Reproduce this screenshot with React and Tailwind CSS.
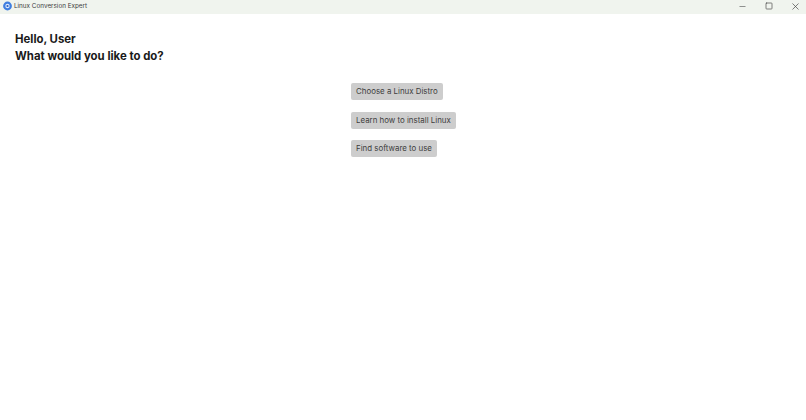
import { Minus, Square, X } from 'lucide-react'

const CHOICES = ['Choose a Linux Distro', 'Learn how to install Linux', 'Find software to use']

function TitleBar() {
  return (
    <div className="flex items-start justify-between h-[14px] bg-[#f0f4ee]">
      <div className="flex items-center gap-[2px] pl-[3px] pt-[1px]">
        <svg width="9" height="10" viewBox="0 0 9 10">
          <circle cx="4.5" cy="5" r="4.4" fill="#3f7fe0" />
          <circle cx="4.5" cy="5" r="2.2" fill="#dbe8fb" />
          <circle cx="4.5" cy="5" r="1.1" fill="#2a5fc0" />
        </svg>
        <span className="text-[6.35px] leading-[10px] text-[#3d3d3d]">Linux Conversion Expert</span>
      </div>
      <div className="flex items-center gap-[17.5px] pr-[5px] pt-[0.5px] text-[#444444]">
        <Minus size={9} strokeWidth={1.5} />
        <Square size={8} strokeWidth={2} />
        <X size={11} strokeWidth={1.5} />
      </div>
    </div>
  )
}

export default function App() {
  return (
    <div className="h-[420px] w-[806px] overflow-hidden bg-white font-['Inter',sans-serif]">
      <TitleBar />
      <div className="pl-[15px] pt-[17px]">
        <h1 className="text-[11.4px] leading-[17px] font-bold text-[#1a1a1a]">Hello, User</h1>
        <h2 className="text-[11.4px] leading-[17px] font-bold text-[#1a1a1a]">What would you like to do?</h2>
      </div>
      <div className="flex flex-col items-start gap-[11.5px] pl-[351px] pt-[18px]">
        {CHOICES.map(c => (
          <button key={c} className="h-[17px] rounded-[2px] bg-[#cdcdcd] px-[5px] text-[7.9px] leading-[17px] text-[#3d3d3d]">{c}</button>
        ))}
      </div>
    </div>
  )
}
